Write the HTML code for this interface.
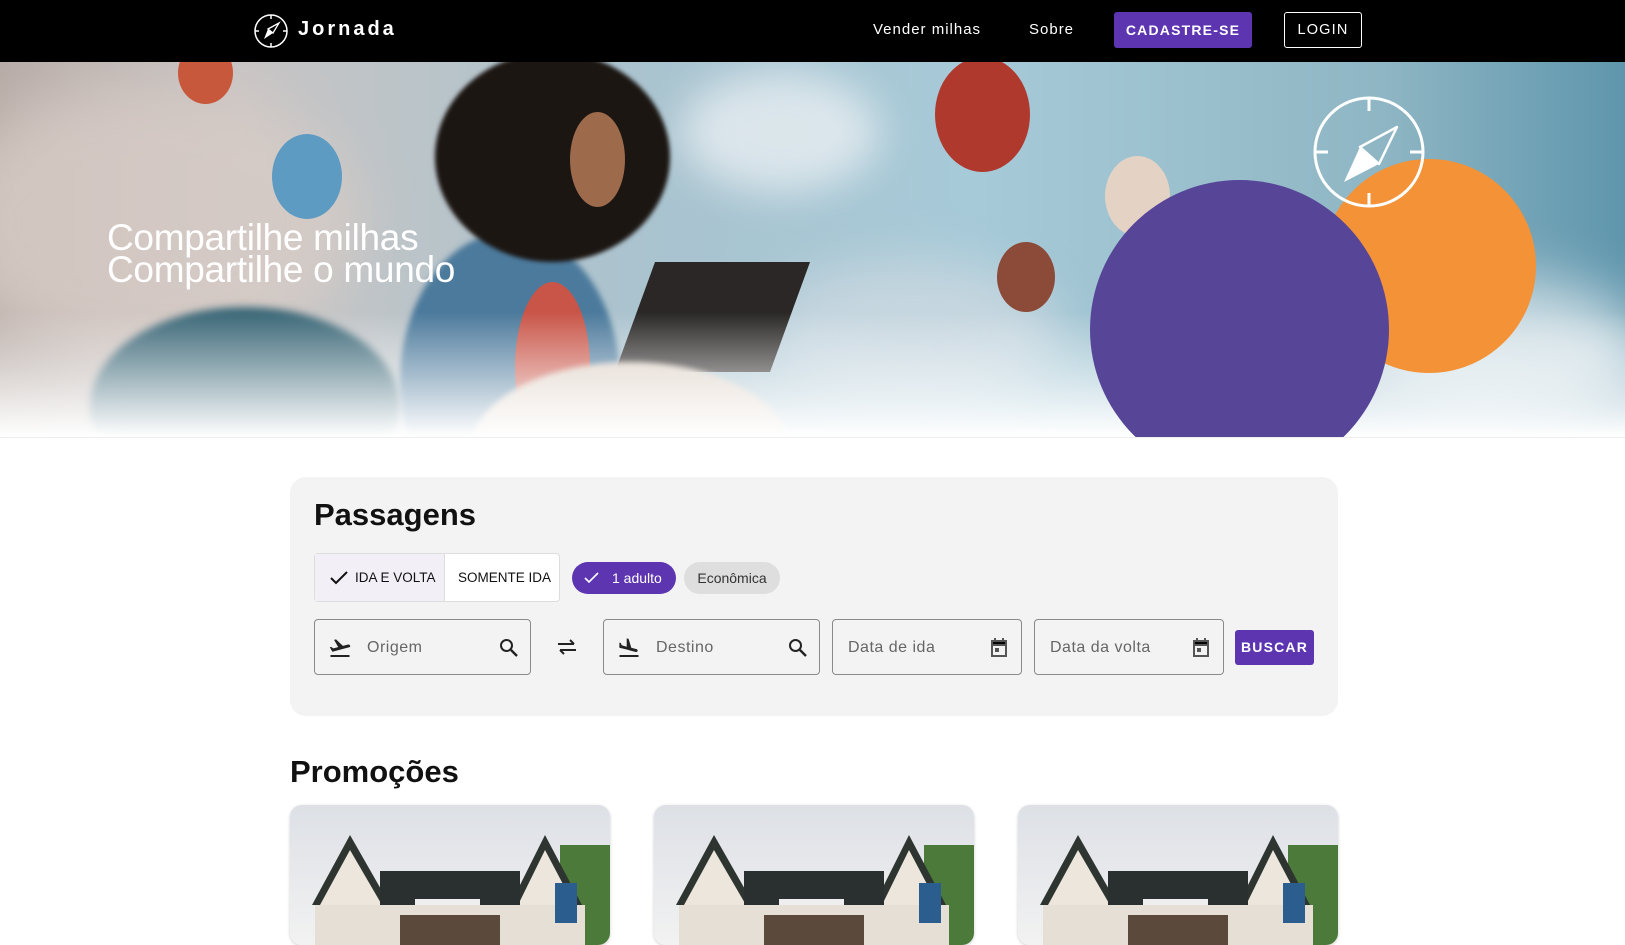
<!DOCTYPE html>
<html><head><meta charset="utf-8">
<style>
*{box-sizing:border-box;margin:0;padding:0}
body{width:1625px;height:930px;overflow:hidden;background:#fff;font-family:"Liberation Sans",sans-serif;position:relative}
.nav{position:absolute;left:0;top:0;width:1625px;height:62px;background:#000;color:#fff}
.nav .logo{position:absolute;left:253px;top:13px;width:36px;height:36px}
.nav .brand{position:absolute;left:298px;top:18px;font-size:20px;font-weight:bold;letter-spacing:3px}
.nav a{position:absolute;top:21px;font-size:15px;letter-spacing:1px;color:#fff}
.btn1{position:absolute;left:1114px;top:12px;width:138px;height:36px;background:#5e35b1;border-radius:3px;color:#fff;font-size:14px;letter-spacing:1.2px;font-weight:bold;text-align:center;line-height:36px}
.btn2{position:absolute;left:1284px;top:12px;width:78px;height:36px;border:1px solid #fff;border-radius:3px;color:#fff;font-size:14.5px;letter-spacing:1.2px;text-align:center;line-height:34px}
.hero{position:absolute;left:0;top:62px;width:1625px;height:375px;overflow:hidden;
background:linear-gradient(90deg,#b7aba6 0%,#c7c4c4 15%,#a9c3cf 40%,#a7cad8 60%,#8fb6c4 85%,#5f96ad 100%)}
.b{position:absolute;border-radius:50%}
.htext{position:absolute;left:107px;top:160px;color:#fff;font-size:37px;line-height:32px;font-family:"Liberation Sans",sans-serif;letter-spacing:-0.3px}
.panel{position:absolute;left:290px;top:477px;width:1048px;height:239px;background:#f3f3f3;border-radius:16px}
h2{position:absolute;font-size:31px;font-weight:bold;color:#111}
.tg{position:absolute;left:314px;top:553px;width:246px;height:49px;border:1px solid #ddd;border-radius:4px;background:#fff;font-size:13.5px;color:#111}
.chip{position:absolute;top:562px;height:32px;border-radius:16px;font-size:14px;line-height:32px}
.field{position:absolute;top:619px;height:56px;border:1px solid #8a8a8a;border-radius:4px;background:#f3f3f3;font-size:16px;color:#666;letter-spacing:.5px}
.field span{position:absolute;top:19px}
.field svg{position:absolute;top:16px}
.card{position:absolute;top:805px;width:320px;height:140px;border-radius:12px;overflow:hidden;box-shadow:0 1px 3px rgba(0,0,0,.2)}
</style></head><body>
<div class="nav">
<svg class="logo" viewBox="0 0 36 36"><circle cx="18" cy="18" r="16" fill="none" stroke="#fff" stroke-width="1.5"/><path d="M18 2v4M18 30v4M2 18h4M30 18h4" stroke="#fff" stroke-width="1.5"/><path d="M15 16L11 26L20 20Z" fill="#fff"/><path d="M15 16L26 10L20 20Z" fill="none" stroke="#fff" stroke-width="1.3"/></svg>
<div class="brand">Jornada</div>
<a style="left:873px">Vender milhas</a>
<a style="left:1029px">Sobre</a>
<div class="btn1">CADASTRE-SE</div>
<div class="btn2">LOGIN</div>
</div>
<div class="hero">
<div class="b" style="left:-60px;top:20px;width:420px;height:280px;background:#d8ccc6;filter:blur(30px);opacity:.8"></div>
<div class="b" style="left:680px;top:10px;width:200px;height:120px;background:#e8eef2;filter:blur(20px);opacity:.8"></div>
<div class="b" style="left:760px;top:200px;width:300px;height:140px;background:#c6d6df;filter:blur(25px)"></div>
<div class="b" style="left:1350px;top:220px;width:300px;height:140px;background:#d2e0e6;filter:blur(30px)"></div>
<div class="b" style="left:178px;top:-20px;width:55px;height:62px;background:#c8583c"></div>
<div class="b" style="left:272px;top:72px;width:70px;height:85px;background:#5d9bc2"></div>
<div class="b" style="left:935px;top:-5px;width:95px;height:115px;background:#b0392e"></div>
<div class="b" style="left:1105px;top:94px;width:65px;height:80px;background:#e4d2c4"></div>
<div class="b" style="left:997px;top:180px;width:58px;height:70px;background:#8c4a38"></div>
<div class="b" style="left:90px;top:245px;width:310px;height:200px;background:#3c6878;filter:blur(4px)"></div>
<div class="b" style="left:400px;top:170px;width:220px;height:300px;background:#4c7a9c;filter:blur(3px)"></div>
<div class="b" style="left:515px;top:220px;width:75px;height:170px;background:#c95548"></div>
<div class="b" style="left:435px;top:-10px;width:235px;height:210px;background:#1c1612;filter:blur(2px)"></div>
<div class="b" style="left:570px;top:50px;width:55px;height:95px;background:#9d6a4c"></div>
<div style="position:absolute;left:635px;top:200px;width:155px;height:110px;background:#2a2726;transform:skewX(-20deg)"></div>
<div class="b" style="left:470px;top:300px;width:320px;height:180px;background:#ddd0c4;filter:blur(3px)"></div>
<div style="position:absolute;left:0;top:250px;width:1625px;height:125px;background:linear-gradient(180deg,rgba(255,255,255,0),#fff)"></div>
<div class="htext">Compartilhe milhas<br>Compartilhe o mundo</div>
<div class="b" style="left:1322px;top:97px;width:214px;height:214px;background:#f39237"></div>
<div class="b" style="left:1090px;top:118px;width:299px;height:299px;background:#574598"></div>
<svg style="position:absolute;left:1311px;top:32px" width="116" height="116" viewBox="0 0 116 116"><circle cx="58" cy="58" r="54" fill="none" stroke="#fff" stroke-width="3"/><path d="M58 4v13M58 99v13M4 58h13M99 58h13" stroke="#fff" stroke-width="3"/><path d="M49 53L33 88L68 70Z" fill="#fff"/><path d="M49 53L86 33L68 70Z" fill="none" stroke="#fff" stroke-width="2.5" stroke-linejoin="round"/></svg>
</div>
<div style="position:absolute;left:0;top:437px;width:1625px;height:1px;background:#eee"></div>
<div class="panel"></div>
<h2 style="left:314px;top:497px">Passagens</h2>
<div class="tg"><div style="position:absolute;left:0;top:0;width:130px;height:47px;background:#f3eff6;border-right:1px solid #ddd"></div>
<svg style="position:absolute;left:14px;top:15px" width="20" height="18" viewBox="0 0 20 18"><path d="M2 9l5 5L18 3" fill="none" stroke="#111" stroke-width="2"/></svg>
<span style="position:absolute;left:40px;top:16px">IDA E VOLTA</span><span style="position:absolute;left:143px;top:16px">SOMENTE IDA</span></div>
<div class="chip" style="left:572px;width:104px;background:#5e35b1;color:#fff"><svg style="position:absolute;left:11px;top:9px" width="18" height="14" viewBox="0 0 18 14"><path d="M2 7l4 4L15 2" fill="none" stroke="#fff" stroke-width="1.6"/></svg><span style="position:absolute;left:40px">1 adulto</span></div>
<div class="chip" style="left:684px;width:96px;background:#dedede;color:#333;text-align:center">Econômica</div>
<div class="field" style="left:314px;width:217px"><svg style="left:13px" width="24" height="24" viewBox="0 0 24 24"><path d="M2.5 19h19v2h-19zM22 9.6c-.2-.8-1-1.3-1.8-1.1L14.9 9.9 8 3.4l-1.9.5 4.1 7.2-5 1.3-2-1.5-1.4.4 2.6 4.5 16.8-4.5c.8-.2 1.3-1 1-1.7z" fill="#222"/></svg><span style="left:52px">Origem</span><svg style="left:182px" width="24" height="24" viewBox="0 0 24 24"><circle cx="9.5" cy="9.5" r="5.5" fill="none" stroke="#222" stroke-width="2"/><path d="M14 14l6 6" stroke="#222" stroke-width="2.4"/></svg></div>
<svg style="position:absolute;left:555px;top:635px" width="24" height="24" viewBox="0 0 24 24"><path d="M3 9h16M15 5l4 4M21 15H5M9 19l-4-4" fill="none" stroke="#222" stroke-width="2"/></svg>
<div class="field" style="left:603px;width:217px"><svg style="left:13px" width="24" height="24" viewBox="0 0 24 24"><path d="M2.5 19h19v2h-19zM9.2 13.4l4.3 1.2 5.3 1.4c.8.2 1.6-.3 1.8-1.1.2-.8-.3-1.600-1-1.8l-5.3-1.4L11.6 2.9l-1.9-.5v8.3L4.7 9.3l-.9-2.3-1.4-.4v5.2l6.8 1.6z" fill="#222"/></svg><span style="left:52px">Destino</span><svg style="left:182px" width="24" height="24" viewBox="0 0 24 24"><circle cx="9.5" cy="9.5" r="5.5" fill="none" stroke="#222" stroke-width="2"/><path d="M14 14l6 6" stroke="#222" stroke-width="2.4"/></svg></div>
<div class="field" style="left:832px;width:190px"><span style="left:15px">Data de ida</span><svg style="left:154px" width="24" height="24" viewBox="0 0 24 24"><path d="M5 5h14v15H5z" fill="none" stroke="#555" stroke-width="2"/><path d="M5 5h14v4H5zM8 2v4M16 2v4" stroke="#555" stroke-width="2"/><rect x="8" y="12" width="4" height="4" fill="#555"/></svg></div>
<div class="field" style="left:1034px;width:190px"><span style="left:15px">Data da volta</span><svg style="left:154px" width="24" height="24" viewBox="0 0 24 24"><path d="M5 5h14v15H5z" fill="none" stroke="#555" stroke-width="2"/><path d="M5 5h14v4H5zM8 2v4M16 2v4" stroke="#555" stroke-width="2"/><rect x="8" y="12" width="4" height="4" fill="#555"/></svg></div>
<div style="position:absolute;left:1235px;top:630px;width:79px;height:35px;background:#5e35b1;border-radius:3px;color:#fff;font-size:14px;font-weight:bold;letter-spacing:1.2px;text-align:center;line-height:35px">BUSCAR</div>
<h2 style="left:290px;top:754px;font-size:31px">Promoções</h2>
<div class="card" style="left:290px"><svg width="320" height="140" viewBox="0 0 320 140"><defs><linearGradient id="s" x1="0" y1="0" x2="0" y2="1"><stop offset="0" stop-color="#dde0e6"/><stop offset="1" stop-color="#f2f2f2"/></linearGradient></defs><rect width="320" height="140" fill="url(#s)"/><rect x="270" y="40" width="50" height="100" fill="#4c7a3a"/><path d="M22 100L60 30L100 100Z" fill="#2e3530"/><path d="M30 100L60 45L92 100Z" fill="#ece6dc"/><path d="M220 100L255 30L292 100Z" fill="#2e3530"/><path d="M228 100L255 45L284 100Z" fill="#ece6dc"/><rect x="90" y="66" width="140" height="40" fill="#2a2f30"/><rect x="125" y="94" width="65" height="10" fill="#eee"/><rect x="25" y="100" width="270" height="40" fill="#e6dfd6"/><rect x="265" y="78" width="22" height="40" fill="#2b5e8f"/><rect x="110" y="110" width="100" height="30" fill="#5b4a3c"/></svg></div>
<div class="card" style="left:654px"><svg width="320" height="140" viewBox="0 0 320 140"><rect width="320" height="140" fill="url(#s)"/><rect x="270" y="40" width="50" height="100" fill="#4c7a3a"/><path d="M22 100L60 30L100 100Z" fill="#2e3530"/><path d="M30 100L60 45L92 100Z" fill="#ece6dc"/><path d="M220 100L255 30L292 100Z" fill="#2e3530"/><path d="M228 100L255 45L284 100Z" fill="#ece6dc"/><rect x="90" y="66" width="140" height="40" fill="#2a2f30"/><rect x="125" y="94" width="65" height="10" fill="#eee"/><rect x="25" y="100" width="270" height="40" fill="#e6dfd6"/><rect x="265" y="78" width="22" height="40" fill="#2b5e8f"/><rect x="110" y="110" width="100" height="30" fill="#5b4a3c"/></svg></div>
<div class="card" style="left:1018px"><svg width="320" height="140" viewBox="0 0 320 140"><rect width="320" height="140" fill="url(#s)"/><rect x="270" y="40" width="50" height="100" fill="#4c7a3a"/><path d="M22 100L60 30L100 100Z" fill="#2e3530"/><path d="M30 100L60 45L92 100Z" fill="#ece6dc"/><path d="M220 100L255 30L292 100Z" fill="#2e3530"/><path d="M228 100L255 45L284 100Z" fill="#ece6dc"/><rect x="90" y="66" width="140" height="40" fill="#2a2f30"/><rect x="125" y="94" width="65" height="10" fill="#eee"/><rect x="25" y="100" width="270" height="40" fill="#e6dfd6"/><rect x="265" y="78" width="22" height="40" fill="#2b5e8f"/><rect x="110" y="110" width="100" height="30" fill="#5b4a3c"/></svg></div>
</body></html>
